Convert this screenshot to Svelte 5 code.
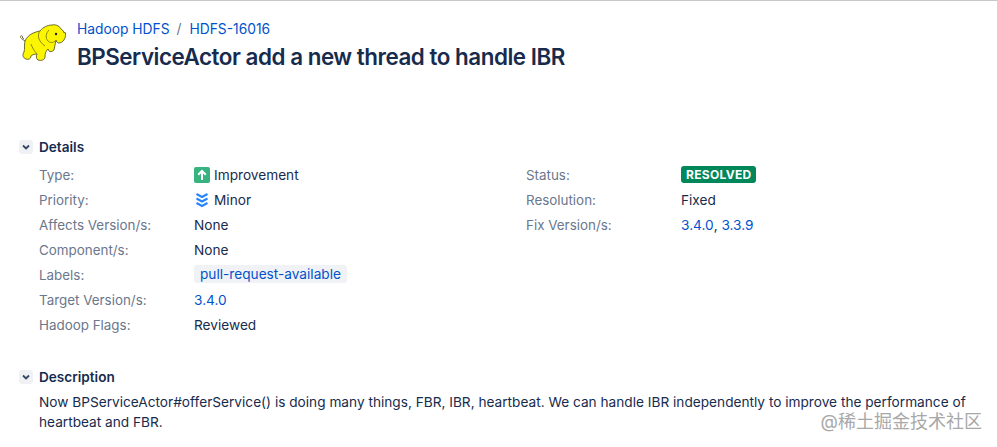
<script>
    const left = [
        { label: "Type:", value: "Improvement", icon: "type" },
        { label: "Priority:", value: "Minor", icon: "priority" },
        { label: "Affects Version/s:", value: "None" },
        { label: "Component/s:", value: "None" },
        { label: "Labels:", tag: "pull-request-available" },
        { label: "Target Version/s:", link: "3.4.0" },
        { label: "Hadoop Flags:", value: "Reviewed" }
    ];
</script>

<div class="page">
    <header class="head">
        <svg class="logo" viewBox="0 0 48 38" width="48" height="38">
            <path d="M6 17C3 15 1 14 1.500 12.500S4 11.500 3.500 14L5 15" fill="none" stroke="#6b6b4a" stroke-width="1"/>
            <path d="M6 17C9 10 16 8 21 7 24 3 29 1 33 1 38 0 41 3 42 5 44 6 45 8 45 9 46 8 46.500 8 46.500 10 47 14 44 19 40 19 38 19 37 17 37 16 36 19 36 23 35 26 33 28 31 28 30 27L29 25C27 27 26 29 26 33 26 36 22 37 19 36 17 35 17 32 18 30 15 30 13 31 12 32 12 35 9 36 7 35 4 34 3 31 5 28 6 25 5 21 6 17Z" fill="#fcf500" stroke="#4a4a1a" stroke-width=".8"/>
            <path d="M21 7C18 11 19 17 26 22M30 6C27 9 26 14 29 17 31 19 34 19 36 17M12 20C13 23 15 27 18 30" fill="none" stroke="#8d8a10" stroke-width="1"/>
            <circle cx="37" cy="10" r="1.200" fill="#222"/>
        </svg>
        <div class="head-text">
            <nav class="crumbs">
                <a href="#p">Hadoop HDFS</a>
                <span class="slash">/</span>
                <a href="#i">HDFS-16016</a>
            </nav>
            <h1>BPServiceActor add a new thread to handle IBR</h1>
        </div>
    </header>

    <section class="details">
        <div class="mod-head">
            <span class="toggle">
                <svg viewBox="0 0 12 12" width="12" height="12"><path d="M3 4.500l3 3 3-3" fill="none" stroke="#344563" stroke-width="1.800"/></svg>
            </span>
            <h2>Details</h2>
        </div>
        <div class="cols">
            <dl class="col col-left">
                {#each left as row}
                    <div class="row">
                        <dt>{row.label}</dt>
                        <dd>
                            {#if row.icon === "type"}
                                <svg class="ico" viewBox="0 0 16 16" width="16" height="16">
                                    <rect width="16" height="16" rx="2" fill="#36b37e"/>
                                    <path d="M8 13V4M4.200 7.800L8 4l3.800 3.800" fill="none" stroke="#fff" stroke-width="2"/>
                                </svg>
                            {:else if row.icon === "priority"}
                                <svg class="ico" viewBox="0 0 16 16" width="16" height="16">
                                    <path d="M2.500 2l5.500 3 5.500-3M2.500 6.500l5.500 3 5.500-3M2.500 11l5.500 3 5.500-3" fill="none" stroke="#2684ff" stroke-width="2"/>
                                </svg>
                            {/if}
                            {#if row.tag}
                                <a class="tag" href="#t">{row.tag}</a>
                            {:else if row.link}
                                <a href="#v">{row.link}</a>
                            {:else}
                                {row.value}
                            {/if}
                        </dd>
                    </div>
                {/each}
            </dl>
            <dl class="col">
                <div class="row">
                    <dt>Status:</dt>
                    <dd><span class="status">RESOLVED</span></dd>
                </div>
                <div class="row">
                    <dt>Resolution:</dt>
                    <dd>Fixed</dd>
                </div>
                <div class="row">
                    <dt>Fix Version/s:</dt>
                    <dd><a href="#a">3.4.0</a>, <a href="#b">3.3.9</a></dd>
                </div>
            </dl>
        </div>
    </section>

    <section class="description">
        <div class="mod-head">
            <span class="toggle">
                <svg viewBox="0 0 12 12" width="12" height="12"><path d="M3 4.500l3 3 3-3" fill="none" stroke="#344563" stroke-width="1.800"/></svg>
            </span>
            <h2>Description</h2>
        </div>
        <p>Now BPServiceActor#offerService() is doing many things, FBR, IBR, heartbeat. We can handle IBR independently to improve the performance of heartbeat and FBR.</p>
    </section>

    <div class="watermark">@稀土掘金技术社区</div>
</div>

<style>

:global(body){
    margin:0;
    background:#fff;
}

.page{
    position:relative;
    width:997px;
    height:447px;
    box-sizing:border-box;
    border-top:1px solid #c8c8c8;
    overflow:hidden;
    font-family:Inter, "Noto Sans CJK SC", sans-serif;
    font-size:13.66px;
    line-height:20px;
    color:#172b4d;
}

a{
    color:#0052cc;
    text-decoration:none;
}

.head{
    display:flex;
    align-items:flex-start;
    padding:18px 0 0 19px;
    height:124px;
    box-sizing:border-box;
}

.logo{
    margin:5px 10px 0 0;
    flex:none;
}

.crumbs{
    display:flex;
    gap:7px;
    line-height:20px;
    font-size:13.8px;
}

.slash{
    color:#6b778c;
    margin-right:1px;
}

h1{
    margin:4px 0 0;
    font-size:22.4px;
    line-height:28px;
    font-weight:600;
    letter-spacing:-.47px;
}

.details{
    height:218px;
}

.mod-head{
    display:flex;
    align-items:center;
    height:20px;
    padding-left:19px;
    margin-top:12px;
}

.toggle{
    width:14px;
    height:14px;
    margin-right:6px;
    border-radius:3px;
    background:#f0f1f4;
    display:flex;
    align-items:center;
    justify-content:center;
}

h2{
    margin:0;
    font-size:13.6px;
    font-weight:600;
}

.cols{
    display:flex;
    padding:5px 0 0 39px;
}

.col{
    margin:0;
}

.col-left{
    width:487px;
}

.row{
    display:flex;
    height:25px;
    align-items:center;
}

dt{
    width:155px;
    color:#6b778c;
    font-size:13.4px;
}

dd{
    margin:0;
    display:flex;
    align-items:center;
    white-space:pre;
}

.ico{
    margin-right:4px;
}

.tag{
    background:#f0f2f5;
    border-radius:3px;
    padding:0 6px;
    line-height:18px;
    margin-top:-1px;
}

.status{
    background:#00875a;
    color:#fff;
    font-size:12px;
    font-weight:700;
    line-height:17px;
    padding:0 5px;
    border-radius:3px;
    letter-spacing:.3px;
}

.description p{
    margin:5px 0 0;
    padding-left:39px;
    width:940px;
}

.watermark{
    position:absolute;
    right:15px;
    bottom:15px;
    font-size:18px;
    line-height:20px;
    color:#a8a8a8;
}

</style>
